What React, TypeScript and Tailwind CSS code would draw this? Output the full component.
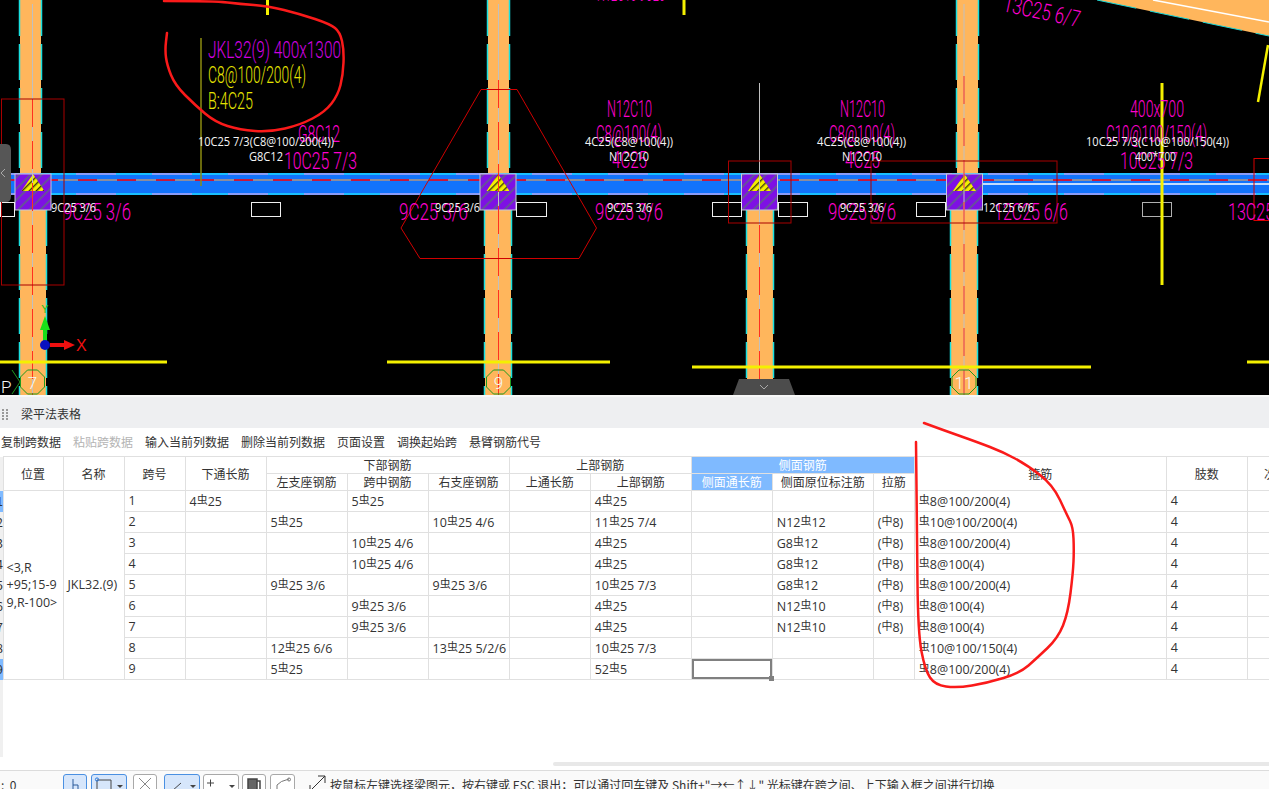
import React from "react";

const cjk = "font-['Noto_Sans_CJK_SC','Noto_Sans',sans-serif]";

function T({ x, y, w, s = 23, c = "#ff00d0", t, r }: { x: number; y: number; w: number; s?: number; c?: string; t: string; r?: string }) {
  return (
    <text x={x} y={y} fontSize={s} fontWeight={300} fill={c} textLength={w} lengthAdjust="spacingAndGlyphs" transform={r} className="font-['Roboto',sans-serif]">
      {t}
    </text>
  );
}
const W = (x: number, y: number, w: number, t: string) => (
  <text x={x} y={y} fontSize={12} fill="#f4f4f4" textLength={w} lengthAdjust="spacingAndGlyphs" className="font-['Open_Sans',sans-serif]">
    {t}
  </text>
);

function smooth(p: number[][]) {
  let d = `M${p[0][0]} ${p[0][1]}`;
  for (let i = 1; i < p.length - 1; i++) {
    const mx = (p[i][0] + p[i + 1][0]) / 2;
    const my = (p[i][1] + p[i + 1][1]) / 2;
    d += ` Q${p[i][0]} ${p[i][1]} ${mx} ${my}`;
  }
  const l = p[p.length - 1];
  return `${d} L${l[0]} ${l[1]}`;
}

function Col({ x1, x2, lx1, lx2, top = 0, split = 173 }: { x1: number; x2: number; lx1: number; lx2: number; top?: number; split?: number }) {
  return (
    <g>
      <rect x={x1} y={top} width={x2 - x1} height={split - top} fill="#ffb65c" />
      <rect x={lx1} y={split} width={lx2 - lx1} height={395 - split} fill="#ffb65c" />
      <g stroke="#19e0e0" strokeWidth="1.5" strokeDasharray="36 8">
        <line x1={x1 - 0.5} y1={top} x2={x1 - 0.5} y2={split} />
        <line x1={x2 + 0.5} y1={top} x2={x2 + 0.5} y2={split} />
        <line x1={lx1 - 0.5} y1={210} x2={lx1 - 0.5} y2={395} />
        <line x1={lx2 + 0.5} y1={210} x2={lx2 + 0.5} y2={395} />
      </g>
    </g>
  );
}
const Center = ({ cx, y = 4 }: { cx: number; y?: number }) => (
  <line x1={cx} y1={y} x2={cx} y2={395} stroke="#c0c0c0" strokeWidth="1" />
);
const RedDash = ({ cx, y }: { cx: number; y: number }) => (
  <line x1={cx} y1={y} x2={cx} y2={395} stroke="#ff3020" strokeWidth="1" strokeDasharray="28 14" />
);

function Node({ x }: { x: number }) {
  const cx = x + 18;
  return (
    <g>
      <rect x={x} y={174} width={36} height={36} fill="url(#hatchP)" stroke="#c8c8d8" strokeWidth="1" />
      <polygon points={`${cx},174 ${cx - 11.5},191 ${cx + 11.5},191`} fill="url(#hatchY)" />
    </g>
  );
}

const whiteRect = (x: number, w: number, c = "#f0f0f0") => <rect x={x + 0.5} y={202.5} width={w} height={14} fill="none" stroke={c} />;

function Axis({ x, t }: { x: number; t: string }) {
  return (
    <g>
      <polygon points={`${x - 5},370 ${x + 5},370 ${x + 12},377 ${x + 12},387 ${x + 5},394 ${x - 5},394 ${x - 12},387 ${x - 12},377`} fill="none" stroke="#1f9a1f" strokeWidth="1" />
      <text x={x} y={389} textAnchor="middle" fontSize={17} fontWeight={300} fill="#f6f6f6" className="font-['Roboto',sans-serif]">{t}</text>
    </g>
  );
}

function Canvas() {
  return (
    <svg width="1269" height="395" viewBox="0 0 1269 395" className="block bg-black shrink-0">
      <defs>
        <pattern id="hatchP" width="8" height="8" patternUnits="userSpaceOnUse" patternTransform="rotate(45)">
          <rect width="8" height="8" fill="#7e10e4" />
          <rect width="2" height="8" fill="#66509a" />
        </pattern>
        <pattern id="hatchY" width="5" height="5" patternUnits="userSpaceOnUse" patternTransform="rotate(45)">
          <rect width="5" height="5" fill="#f4f000" />
          <rect width="1.4" height="5" fill="#403c10" />
        </pattern>
      </defs>

      <polygon points="1097,0 1269,36 1269,0" fill="#ffb65c" />
      <line x1="1097" y1="0" x2="1269" y2="36" stroke="#19d6d6" strokeWidth="1" strokeDasharray="40 14" />
      <line x1="1153" y1="0" x2="1269" y2="22" stroke="#ffffff" strokeWidth="1.5" />
      <line x1="1268" y1="45" x2="1258" y2="102" stroke="#f4f000" strokeWidth="2.5" />

      <Col x1={20} x2={41} lx1={20} lx2={46} />
      <Col x1={488} x2={509} lx1={485} lx2={511} />
      <Col x1={747} x2={773} lx1={747} lx2={773} top={210} split={210} />
      <Col x1={957} x2={978} lx1={951} lx2={977} />

      <rect x="0" y="173" width="1269" height="22" fill="#1273fb" />
      <line x1="0" y1="174" x2="1269" y2="174" stroke="#19c0ff" strokeWidth="2" />
      <line x1="0" y1="174" x2="1269" y2="174" stroke="#8a9cf8" strokeWidth="2" strokeDasharray="40 36" />
      <line x1="0" y1="194" x2="1269" y2="194" stroke="#19c0ff" strokeWidth="2" />
      <line x1="0" y1="194" x2="1269" y2="194" stroke="#8a9cf8" strokeWidth="2" strokeDasharray="40 36" />
      <line x1="0" y1="180" x2="1269" y2="180" stroke="#8c8c9c" strokeWidth="2" />
      <line x1="0" y1="180" x2="1269" y2="180" stroke="#c8183c" strokeWidth="2" strokeDasharray="19 20" />
      <line x1="983" y1="184" x2="1269" y2="184" stroke="#ffffff" strokeWidth="1.5" />

      <Node x={15} />
      <Node x={480} />
      <Node x={741.5} />
      <Node x={946.5} />

      <Center cx={32.5} />
      <Center cx={498.5} />
      <Center cx={759.5} y={83} />
      <Center cx={964} />
      <RedDash cx={32.5} y={99} />
      <RedDash cx={498.5} y={80} />
      <RedDash cx={759.5} y={225} />
      <RedDash cx={964} y={76} />

      {whiteRect(0, 14)}
      {whiteRect(251, 29)}
      {whiteRect(516, 30)}
      {whiteRect(712, 29)}
      {whiteRect(778, 29)}
      {whiteRect(916, 29)}
      {whiteRect(1142, 29, "#b0b0b0")}

      <g fill="none" strokeWidth="1">
        <rect x="1.5" y="99" width="62.5" height="186" stroke="#a80000" />
        <rect x="728.5" y="161" width="62.5" height="62" stroke="#a80000" />
        <rect x="871" y="161" width="186" height="62" stroke="#a80000" />
        <rect x="1254" y="158.5" width="30" height="62" stroke="#d80000" />
        <polygon points="481,89.5 517,89.5 596.5,228 579,258.5 420,258.5 401,228" stroke="#d00000" />
      </g>

      <g stroke="#f4f000" strokeWidth="3">
        <line x1="0" y1="362" x2="167" y2="362" />
        <line x1="387" y1="362" x2="610" y2="362" />
        <line x1="692" y1="367" x2="1091" y2="367" />
        <line x1="1247" y1="362" x2="1269" y2="362" />
        <line x1="1162" y1="83" x2="1162" y2="285" />
        <line x1="267.5" y1="0" x2="267.5" y2="15" />
        <line x1="684" y1="0" x2="684" y2="15" />
      </g>
      <line x1="201" y1="38" x2="201" y2="186" stroke="#8c8c10" strokeWidth="1.5" />

      <T x={208} y={58} w={133} c="#d000e0" t="JKL32(9) 400x1300" />
      <T x={208} y={83} w={98} c="#e4e400" t="C8@100/200(4)" />
      <T x={208} y={109} w={45} c="#e4e400" t="B:4C25" />
      <T x={298} y={142} w={42} t="G8C12" />
      <T x={284} y={169} w={73} t="10C25 7/3" />
      <T x={63} y={220} w={68} t="9C25 3/6" />
      <T x={399} y={220} w={69} t="9C25 3/6" />
      <T x={595} y={220} w={68} t="9C25 3/6" />
      <T x={828} y={220} w={68} t="9C25 3/6" />
      <T x={994} y={220} w={74} t="12C25 6/6" />
      <T x={1228} y={220} w={74} t="13C25 3/6" />
      <T x={607} y={117} w={45} t="N12C10" />
      <T x={596} y={142} w={66} t="C8@100(4)" />
      <T x={612} y={168} w={35} t="4C25" />
      <T x={840} y={117} w={45} t="N12C10" />
      <T x={829} y={142} w={66} t="C8@100(4)" />
      <T x={845} y={168} w={35} t="4C25" />
      <T x={1130} y={117} w={54} t="400x700" />
      <T x={1106} y={142} w={101} t="C10@100/150(4)" />
      <T x={1120} y={169} w={73} t="10C25 7/3" />
      <T x={597} y={1} w={68} t="N12C10 9C25" />
      <T x={1002} y={11} w={78} t="13C25 6/7" r="rotate(12 1002 11)" />

      {W(198, 146, 136, "10C25 7/3(C8@100/200(4))")}
      {W(249, 161, 34, "G8C12")}
      {W(51, 212, 45, "9C25 3/6")}
      {W(435, 212, 45, "9C25 3/6")}
      {W(607, 212, 45, "9C25 3/6")}
      {W(840, 212, 44, "9C25 3/6")}
      {W(983, 212, 51, "12C25 6/6")}
      {W(585, 146, 88, "4C25(C8@100(4))")}
      {W(609, 161, 40, "N12C10")}
      {W(817, 146, 89, "4C25(C8@100(4))")}
      {W(842, 161, 40, "N12C10")}
      {W(1086, 146, 143, "10C25 7/3(C10@100/150(4))")}
      {W(1135, 161, 41, "400*700")}

      <Axis x={32.5} t="7" />
      <Axis x={498.5} t="9" />
      <Axis x={964} t="11" />
      <polyline points="12,370 20,382 12,394" fill="none" stroke="#1f9a1f" />
      <text x={1} y={393} fontSize={17} fontWeight={300} fill="#f6f6f6" className="font-['Roboto',sans-serif]">P</text>

      <polygon points="45,316 40,330 43,330 43,342 47,342 47,330 50,330" fill="#19e019" />
      <text x={45} y={313} textAnchor="middle" fontSize={11} fill="#19c019" className="font-['Liberation_Sans',sans-serif]">Y</text>
      <polygon points="50,343 64,343 64,340 75,345 64,350 64,347 50,347" fill="#f01010" />
      <circle cx="45" cy="345" r="5" fill="#0a10c0" />
      <text x={76} y={351} fontSize={16} fill="#f01010" className="font-['Liberation_Sans',sans-serif]">X</text>

      <path d="M0 144 H6 Q11 144 11 150 V196 Q11 202 6 202 H0 Z" fill="#565656" />
      <path d="M5 169 L1 173 L5 177" fill="none" stroke="#a8a8a8" />
      <path d="M739 379 H789 L795 395 H733 Z" fill="#4c4c4c" />
      <path d="M760 385 L764 389 L768 385" fill="none" stroke="#a8a8a8" />
    </svg>
  );
}

const rowsData: string[][] = [
  ["1", "4虫25", "", "5虫25", "", "", "4虫25", "", "", "", "虫8@100/200(4)", "4"],
  ["2", "", "5虫25", "", "10虫25 4/6", "", "11虫25 7/4", "", "N12虫12", "(中8)", "虫10@100/200(4)", "4"],
  ["3", "", "", "10虫25 4/6", "", "", "4虫25", "", "G8虫12", "(中8)", "虫8@100/200(4)", "4"],
  ["4", "", "", "10虫25 4/6", "", "", "4虫25", "", "G8虫12", "(中8)", "虫8@100(4)", "4"],
  ["5", "", "9虫25 3/6", "", "9虫25 3/6", "", "10虫25 7/3", "", "G8虫12", "(中8)", "虫8@100/200(4)", "4"],
  ["6", "", "", "9虫25 3/6", "", "", "4虫25", "", "N12虫10", "(中8)", "虫8@100(4)", "4"],
  ["7", "", "", "9虫25 3/6", "", "", "4虫25", "", "N12虫10", "(中8)", "虫8@100(4)", "4"],
  ["8", "", "12虫25 6/6", "", "13虫25 5/2/6", "", "10虫25 7/3", "", "", "", "虫10@100/150(4)", "4"],
  ["9", "", "5虫25", "", "", "", "52虫5", "", "", "", "虫8@100/200(4)", "4"],
];

function Rebar({ s }: { s: string }) {
  const parts = s.split(/(虫|中)/);
  return (
    <>
      {parts.map((p, i) =>
        p === "虫" || p === "中" ? (
          <span key={i} className={`text-[11px] align-[2px] ${cjk}`}>{p}</span>
        ) : (
          <span key={i}>{p}</span>
        )
      )}
    </>
  );
}

const colWidths = [3, 60, 61, 61, 81, 81, 81, 81, 81, 101, 81, 101, 41, 252, 81, 81];
const th = "border border-[#e0e0e0] font-normal text-center p-0 overflow-hidden whitespace-nowrap";
const dataFont = "font-['Open_Sans','Noto_Sans_CJK_SC',sans-serif] text-[12.5px]";
const td = `border border-[#e0e0e0] pl-[4px] pr-[1px] pb-[1px] pt-0 whitespace-nowrap overflow-hidden ${dataFont}`;

function Table() {
  return (
    <table className={`table-fixed border-collapse w-[1329px] text-[12px] leading-[16px] text-[#333] ${cjk}`}>
      <colgroup>
        {colWidths.map((w, i) => (
          <col key={i} width={w} />
        ))}
      </colgroup>
      <thead>
        <tr className="h-[17px]">
          <th rowSpan={2} className="bg-[#f0f0f0] p-0" />
          <th rowSpan={2} className={th}>位置</th>
          <th rowSpan={2} className={th}>名称</th>
          <th rowSpan={2} className={th}>跨号</th>
          <th rowSpan={2} className={th}>下通长筋</th>
          <th colSpan={3} className={th}>下部钢筋</th>
          <th colSpan={2} className={th}>上部钢筋</th>
          <th colSpan={3} className={`${th} bg-[#7fbaff] text-white`}>侧面钢筋</th>
          <th rowSpan={2} className={th}>箍筋</th>
          <th rowSpan={2} className={th}>肢数</th>
          <th rowSpan={2} className={th}>次梁加筋</th>
        </tr>
        <tr className="h-[17px]">
          <th className={th}>左支座钢筋</th>
          <th className={th}>跨中钢筋</th>
          <th className={th}>右支座钢筋</th>
          <th className={th}>上通长筋</th>
          <th className={th}>上部钢筋</th>
          <th className={`${th} bg-[#7fbaff] text-white`}>侧面通长筋</th>
          <th className={th}>侧面原位标注筋</th>
          <th className={th}>拉筋</th>
        </tr>
      </thead>
      <tbody>
        {rowsData.map((r, i) => (
          <tr key={i} className="h-[21px]">
            <td className={`p-0 overflow-hidden ${i === 0 || i === 8 ? "bg-[#7fbaff]" : "bg-[#f0f0f0]"}`}>
              <div className="flex justify-end w-[3px] overflow-hidden text-[#333]">{i + 1}</div>
            </td>
            {i === 0 && (
              <>
                <td rowSpan={9} className={`border border-[#e0e0e0] pl-[3px] pr-0 py-0 leading-[17.5px] overflow-hidden whitespace-nowrap ${dataFont}`}>
                  &lt;3,R
                  <br />
                  +95;15-9
                  <br />
                  9,R-100&gt;
                </td>
                <td rowSpan={9} className={`${td} text-left`}>JKL32.(9)</td>
              </>
            )}
            {r.map((c, j) => (
              <td key={j} className={j === 7 ? "relative border border-[#e0e0e0] p-0" : td}>
                <Rebar s={c} />
                {j === 7 && i === 8 && (
                  <div className="absolute inset-0 border-2 border-[#808080]">
                    <div className="absolute right-[-4px] bottom-[-4px] w-[5px] h-[5px] bg-[#808080]" />
                  </div>
                )}
              </td>
            ))}
            <td className={td} />
          </tr>
        ))}
      </tbody>
    </table>
  );
}

function ToolBtn({ active, w, children }: { active?: boolean; w: string; children: React.ReactNode }) {
  return (
    <div className={`${w} h-6 shrink-0 rounded-[3px] border flex items-start pt-[2px] justify-center ${active ? "bg-[#d6e6fb] border-[#4a90e2]" : "bg-white border-[#a8a8a8]"}`}>
      {children}
    </div>
  );
}

function StatusBar() {
  return (
    <div className={`h-[19px] shrink-0 overflow-hidden border-t border-[#dcdcdc] bg-[#fafafa] flex items-start pt-[3px] text-[12px] leading-[20px] text-[#333] ${cjk}`}>
      <div className="w-[63px] shrink-0 pt-[1px] pl-[1px]">:&nbsp;&nbsp;0</div>
      <ToolBtn active w="w-[24px]">
        <svg width="14" height="14" fill="none" stroke="#2a5a9a"><path d="M5 2V12M5 8H10V12" /></svg>
      </ToolBtn>
      <div className="ml-[4px]">
        <ToolBtn active w="w-[36px]">
          <svg width="30" height="14" fill="none" stroke="#444"><path d="M3 3H17V14M3 3V14" /><circle cx="3" cy="2.5" r="1.6" stroke="#2a7ae0" /><path d="M23 8H29L26 11Z" fill="#444" stroke="none" /></svg>
        </ToolBtn>
      </div>
      <div className="ml-[6px]">
        <ToolBtn w="w-[24px]">
          <svg width="16" height="14" fill="none" stroke="#888"><path d="M2 1L14 13M14 1L2 13" /></svg>
        </ToolBtn>
      </div>
      <div className="ml-[7px]">
        <ToolBtn active w="w-[36px]">
          <svg width="30" height="14" fill="none" stroke="#444"><path d="M5 14L14 6" /><path d="M23 8H29L26 11Z" fill="#444" stroke="none" /></svg>
        </ToolBtn>
      </div>
      <div className="ml-[3px]">
        <ToolBtn w="w-[36px]">
          <svg width="30" height="14" fill="none" stroke="#444"><path d="M1 6H8M4.5 2.5V9.5M10 14H20" /><path d="M23 8H29L26 11Z" fill="#444" stroke="none" /></svg>
        </ToolBtn>
      </div>
      <div className="ml-[3px]">
        <ToolBtn w="w-[24px]">
          <svg width="16" height="14" fill="none" stroke="#444" strokeWidth="1.5"><rect x="2" y="2" width="9" height="12" fill="#666" /><path d="M11 4H14V14" /></svg>
        </ToolBtn>
      </div>
      <div className="ml-[4px]">
        <ToolBtn w="w-[25px]">
          <svg width="18" height="14" fill="none" stroke="#777"><path d="M3 14V8Q6 4 15 2" /><circle cx="15" cy="2.5" r="1.5" /></svg>
        </ToolBtn>
      </div>
      <svg width="18" height="18" className="ml-[14px] shrink-0" fill="none" stroke="#333"><path d="M1 17L16 2M9 2H16V9M1 11V17H7" /></svg>
      <div className="ml-[3px] whitespace-nowrap pt-[1px]">按鼠标左键选择梁图元，按右键或 ESC 退出；可以通过回车键及 Shift+"→←↑↓" 光标键在跨之间、上下输入框之间进行切换</div>
    </div>
  );
}

const circleA = [[164, 1], [215, 1], [240, 4], [268, 6], [300, 14], [330, 24], [340, 32], [344, 50], [343, 75], [338, 95], [325, 112], [300, 125], [270, 132], [240, 130], [215, 122], [195, 105], [175, 85], [167, 65], [165, 50], [167, 33]];
const circleB = [[924, 423], [943, 430], [977, 442], [1003, 452], [1027, 465], [1053, 485], [1067, 515], [1073, 527], [1074, 550], [1073, 573], [1068, 613], [1058, 638], [1037, 658], [1020, 673], [987, 683], [957, 688], [935, 685], [925, 670], [918, 633], [917, 533], [916, 442]];

export default function App() {
  return (
    <div className={`relative w-[1269px] h-[789px] overflow-hidden bg-white flex flex-col ${cjk}`}>
      <Canvas />
      <div className="h-[2px] shrink-0 bg-[#f8f8f8]" />
      <div className="h-[31px] shrink-0 bg-[#eeeff1] flex items-center pl-[2px] pt-[3px] text-[12px] text-[#333]">
        <div className="grid grid-cols-2 gap-x-[2px] gap-y-[1px] w-[6px]">
          {[0, 1, 2, 3, 4, 5, 6, 7].map((i) => (
            <div key={i} className="w-[2px] h-[2px] bg-[#999]" />
          ))}
        </div>
        <span className="ml-[13px]">梁平法表格</span>
      </div>
      <div className="h-[28px] shrink-0 flex items-center gap-3 pl-[1px] text-[12px] text-[#333]">
        <span>复制跨数据</span>
        <span className="text-[#b4b4b4]">粘贴跨数据</span>
        <span>输入当前列数据</span>
        <span>删除当前列数据</span>
        <span>页面设置</span>
        <span>调换起始跨</span>
        <span>悬臂钢筋代号</span>
      </div>
      <div className="flex-1 min-h-0 overflow-hidden">
        <Table />
        <div className="h-[77px] w-[3px] bg-[#f0f0f0]" />
      </div>
      <div className="h-[8px] shrink-0 flex">
        <div className="w-[553px] bg-white" />
        <div className="flex-1 h-[4px] rounded-l-[2px] bg-[#e8e8e8]" />
      </div>
      <StatusBar />
      <svg width="1269" height="789" viewBox="0 0 1269 789" className="absolute inset-0 pointer-events-none" fill="none" stroke="#fa1a1a" strokeWidth="2.5" strokeLinejoin="round" strokeLinecap="round">
        <path d={smooth(circleA)} />
        <path d={smooth(circleB)} />
      </svg>
    </div>
  );
}
